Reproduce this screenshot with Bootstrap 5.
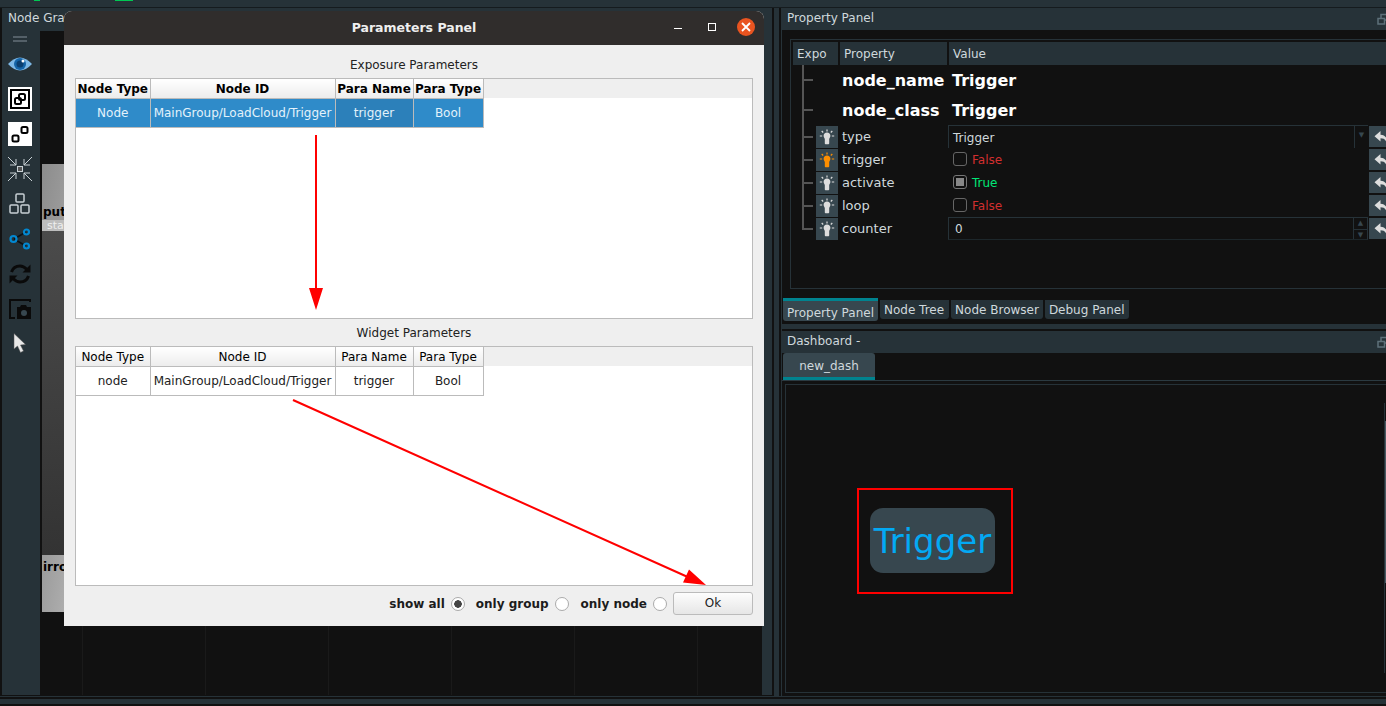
<!DOCTYPE html>
<html lang="en">
<head>
  <meta charset="UTF-8">
  <meta name="viewport" content="width=device-width, initial-scale=1.0">
  <title>Parameters Panel</title>
  <link rel="stylesheet" href="https://cdn.jsdelivr.net/npm/bootstrap@5.3.3/dist/css/bootstrap.min.css">
  <style>
    html, body { height: 100%; overflow: hidden; }
    body { background: #111; font: 12px/1.2 "DejaVu Sans", sans-serif; color: #cfd8dc; }
    .app-root { width: 1386px; height: 706px; position: relative; overflow: hidden; }

    .top-strip { height: 8px; border-bottom: 1px solid #151b1e;
      background: linear-gradient(#00c853, #00c853) 34px 0/6px 1px no-repeat,
                  linear-gradient(#00c853, #00c853) 115px 0/18px 1px no-repeat, #263238; }
    .bottom-strip { height: 10px; padding-top: 2px; border-top: 1px solid #263238; }
    .bottom-strip div { height: 5px; background: #263238; }
    .dock-row { height: 688px; }

    .left-dock { width: 770px; height: 687px; margin-left: 2px; background: #263238; flex: none; }
    .dock-splitter { width: 5px; height: 689px; margin: 0 2px; background: #263238; flex: none; }
    .dock-title { height: 22px; padding: 0 0 1px 5px; background: #263238; color: #cfd8dc; white-space: nowrap; overflow: hidden; }
    .left-dock .dock-title { padding-left: 6px; }
    .lock-icon { margin-left: auto; margin-right: -4px; margin-top: 1px; width: 13px; height: 12px; color: #5d7079; flex: none; }
    .tool-bar { width: 38px; padding: 1px 2px 0 0; background: #263238; }
    .grip { height: 10px; width: 14px; border-top: 2px solid #546068; margin-top: 5px; position: relative; }
    .grip::after { content: ""; position: absolute; left: 0; right: 0; top: 2px; height: 2px; background: #546068; }
    .tool-btn { height: 35px; width: 36px; }
    .graph-canvas { position: relative; height: 664px; margin-right: 10px; margin-top: 1px; overflow: hidden; background:
        linear-gradient(90deg, #1a1a1a 1px, transparent 1px) 42px 0/123px 100%, #111; }
    .node-piece { position: absolute; left: 2px; width: 60px; overflow: hidden; }
    .node-a { top: 133px; height: 67px; background: linear-gradient(100deg, #8c8c8c, #b0b0b0); color: #000; font-weight: 700; padding: 41px 0 0 1px; font-size: 12px; }
    .node-a-sub { position: absolute; left: 0; right: 0; top: 56px; height: 12px; background: #bdbdbd; color: #eee; font-weight: 400; font-size: 11px; padding-left: 5px; line-height: 11px; }
    .node-b { top: 200px; height: 324px; background: linear-gradient(#4b4b4b, #333); }
    .node-c { top: 524px; height: 57px; background: linear-gradient(100deg, #9a9a9a, #c4c4c4); color: #000; font-weight: 700; font-size: 12px; padding: 5px 0 0 1px; }

    .right-dock { width: 605px; border-left: 1px solid #263238; flex: none; }
    .prop-frame { height: 250px; margin: 9px 0 0 8px; border: 1px solid #263238; border-right: 0; padding: 2px 0 0 2px; }
    .prop-head { height: 23px; background: #263238; }
    .prop-head > div { line-height: 25px; padding-left: 4px; }
    .head-expo { width: 47px; border-right: 2px solid #111; }
    .head-prop { width: 109px; border-right: 2px solid #111; }
    .prop-row { position: relative; height: 23px; }
    .prop-row.tall { height: 30px; }
    .tree-gut { width: 23px; position: relative; flex: none; }
    .tree-gut::before { content: ""; position: absolute; left: 9px; top: 0; bottom: 0; width: 2px; background: #555; }
    .tree-gut::after { content: ""; position: absolute; left: 9px; width: 11px; top: 50%; height: 2px; margin-top: -1px; background: #555; }
    .prop-row.last .tree-gut::before { bottom: 50%; }
    .bulb-btn { width: 22px; height: 22px; background: #37474f; flex: none; color: #ddd; }
    .bulb-btn.on { color: #ff8f00; }
    .prop-label { width: 110px; padding-left: 4px; flex: none; font-size: 13px; }
    .prop-row.tall .bulb-gap { width: 22px; flex: none; }
    .prop-label.big-text, .big-text { font-size: 16px; font-weight: 700; color: #fff; white-space: nowrap; padding-top: 2px; }
    .big-value { padding-left: 4px; }
    .value-box { width: 420px; height: 23px; border: 1px solid #263238; border-bottom-color: #1d272b; padding-left: 4px; line-height: 24px; position: relative; flex: none; }
    .value-box.open-bottom { border-bottom: 0; border-right: 0; }
    .value-box.number-box { padding-left: 6px; line-height: 22px; }
    .value-plain { width: 420px; flex: none; padding-left: 5px; }
    .value-plain span { padding-top: 1px; }
    .spin-side { position: absolute; right: 0; top: 0; bottom: 0; width: 14px; border-left: 1px solid #263238; color: #37474f; font-size: 7px; text-align: center; line-height: 11px; }
    .spin-side div + div { border-top: 1px solid #263238; }
    .revert-btn { width: 17px; height: 21px; margin-left: 1px; background: #37474f; color: #ddd; flex: none; overflow: hidden; padding-left: 5px; }
    .revert-btn svg { flex: none; }
    .check-box.form-check-input { width: 14px; height: 14px; margin: 0 5px 0 0; background-color: transparent; border: 1px solid #666; border-radius: 3px; flex: none; }
    .check-box.form-check-input:checked { background-color: transparent; background-image: linear-gradient(#888, #888); background-size: 8px 8px; background-position: center; border-color: #777; }
    .txt-false { color: #d32f2f; }
    .txt-true { color: #00e676; }

    .tab-row { margin: 9px 0 3px 1px; height: 23px; align-items: flex-start; gap: 2px; }
    .dock-tab { color: #cfd8dc; background: #263238; height: 19px; margin-top: 2px; padding: 0 4px; line-height: 21px; border-radius: 0 0 3px 3px; white-space: nowrap; }
    .dock-tab.active-tab { height: 23px; margin-top: 0; border-top: 3px solid #00838f; background: #37474f; line-height: 24px; }
    .dock-tab.wide-tab { padding-right: 5px; }
    .dock-tab:hover { color: #cfd8dc; }
    .split-strip { height: 5px; background: #263238; margin-bottom: 2px; }
    .dash-tabs { height: 28px; border-bottom: 1px solid #2b3a41; padding-left: 1px; }
    .dash-tab { width: 92px; height: 27px; background: #37474f; border-bottom: 3px solid #00838f; border-radius: 3px 3px 0 0; text-align: center; line-height: 27px; color: #cfd8dc; }
    .dash-frame { position: relative; height: 309px; margin: 3px 0 0 3px; border: 1px solid #263238; border-right: 0; }
    .red-box { position: absolute; left: 71px; top: 103px; width: 156px; height: 106px; border: 2px solid #f00; }
    .trigger-btn { position: absolute; left: 84px; top: 123px; width: 125px; height: 65px; border-radius: 13px; background: #37474f; color: #03a9f4; font-size: 34px; line-height: 66px; text-align: center; white-space: nowrap; }
    .side-bar { position: absolute; right: 0; top: 18px; width: 2px; height: 270px; border-left: 1px solid #263238; }
    .side-bar::after { content: ""; position: absolute; left: 0; top: 18px; width: 2px; height: 162px; background: #4a5a62; }

    .param-dialog { position: absolute; left: 64px; top: 11px; width: 700px; height: 615px; background: #efefef; color: #222; border-radius: 8px 8px 0 0; overflow: hidden; }
    .dialog-head { height: 34px; background: #302d2c; color: #eee; font-weight: 700; font-size: 12.5px; position: relative; line-height: 34px; text-align: center; }
    .win-btn { position: absolute; }
    .win-min { left: 610px; top: 17px; width: 8px; height: 1px; background: #fff; }
    .win-max { left: 644px; top: 12px; width: 8px; height: 8px; border: 1px solid #fff; }
    .win-close { left: 673px; top: 7px; width: 18px; height: 18px; border-radius: 50%; background: #e95420; color: #fff; }
    .dialog-body { padding: 0 11px; }
    .grid-label { height: 33px; padding-top: 13px; text-align: center; font-size: 12px; line-height: 15px; }
    .grid-label.second { height: 27px; padding-top: 7px; }
    .grid-frame { height: 241px; border: 1px solid #bbb; background: linear-gradient(#efefef, #efefef) 0 0/100% 19px no-repeat, #fff; }
    .grid-frame.second { height: 240px; }
    .table.param-grid { width: 407px; table-layout: fixed; margin: 0; --bs-table-bg: transparent; border-color: #bbb; font-size: 12px; }
    .param-grid th, .param-grid td { padding: 0; text-align: center; vertical-align: middle; border-color: #bbb; white-space: nowrap; border-width: 0 1px 1px 0; }
    .param-grid th { height: 19px; padding-top: 1px; background: linear-gradient(#fff, #ececec); color: #000; font-weight: 400; }
    .param-grid.strong th { font-weight: 700; }
    .param-grid td { height: 29px; padding-top: 2px; color: #222; }
    .param-grid.selected td { background: #2f8bc9; color: #e3f2fb; }
    .param-grid.selected td.focus-cell { background: #2c80ba; }
    .w-type { width: 74px; } .w-id { width: 185px; } .w-name { width: 78px; } .w-ptype { width: 70px; }
    .dialog-foot { height: 35px; }
    .foot-opt { font-weight: 700; color: #1c1c1c; margin-right: 6px; padding-top: 1px; }
    .foot-radio.form-check-input { width: 14px; height: 14px; margin: 0 11px 0 0; border: 1px solid #aaa; background-color: #fff; flex: none; }
    .foot-radio.mid-radio.form-check-input { margin-right: 12px; }
    .foot-radio.last-radio.form-check-input { margin-right: 6px; }
    .foot-radio.form-check-input:checked { background-color: #fff; border-color: #aaa; background-image: radial-gradient(circle, #444 0 3.5px, transparent 4px); }
    .ok-btn.btn { width: 80px; height: 23px; padding: 0; font-size: 12px; line-height: 21px; color: #222; border: 1px solid #bbb; border-radius: 3px; background: linear-gradient(#fdfdfd, #e6e6e6); }
    .arrow-layer { position: absolute; left: 0; top: 0; pointer-events: none; }
  </style>
</head>
<body>
  <svg width="0" height="0" class="d-none">
    <symbol id="bulb" viewBox="0 0 16 16">
      <path fill="currentColor" d="M8 3.6c-2.1 0-3.4 1.500-3.400 3.200 0 1.400.9 2.200 1.200 3.100v4.300c0 .6.5 1 1 1h2.400c.5 0 1-.4 1-1V9.900c.3-.9 1.200-1.700 1.200-3.100 0-1.700-1.300-3.200-3.400-3.200z"/>
      <path stroke="currentColor" stroke-width="1.200" d="M8 .5v2M2.700 2l1.500 1.500M13.300 2l-1.500 1.500M.8 7h2.400M12.800 7h2.400"/>
    </symbol>
    <symbol id="reply" viewBox="0 0 14 14">
      <path fill="currentColor" d="M6.500 1 .5 6.200l6 5.300V8.300c3 0 5 1 6.300 4.700.8-4.700-1.500-8-6.300-8.300z"/>
    </symbol>
    <symbol id="lock" viewBox="0 0 13 12">
      <path fill="none" stroke="currentColor" stroke-width="1.500" d="M1 5.500h6.500v5.500H1zM4 5V1.500h8v5.500H8"/>
    </symbol>
  </svg>

  <div class="app-root">
    <div class="top-strip"></div>

    <div class="dock-row d-flex">
      <div class="left-dock">
        <div class="dock-title d-flex align-items-center">Node Graph</div>
        <div class="d-flex">
          <div class="tool-bar d-flex flex-column align-items-center">
            <div class="grip"></div>
            <div class="tool-btn d-flex align-items-center justify-content-center">
              <svg width="24" height="16" viewBox="0 0 24 16"><path fill="#7db8e6" d="M0 8Q12-5 24 8 12 21 0 8z"/><circle cx="12" cy="8" r="6" fill="#1565a8"/><circle cx="12" cy="8" r="3.500" fill="#0b3f70"/><circle cx="15" cy="5" r="1.500" fill="#fff"/></svg>
            </div>
            <div class="tool-btn d-flex align-items-center justify-content-center">
              <svg width="24" height="24" viewBox="0 0 24 24"><rect width="24" height="24" fill="#fff"/><rect x="3" y="3" width="18" height="18" fill="none" stroke="#000" stroke-width="2"/><rect x="7" y="11" width="6" height="6" rx="1.500" fill="none" stroke="#000" stroke-width="2"/><rect x="11" y="7" width="6" height="6" rx="1.500" fill="none" stroke="#000" stroke-width="2"/></svg>
            </div>
            <div class="tool-btn d-flex align-items-center justify-content-center">
              <svg width="24" height="24" viewBox="0 0 24 24"><rect width="24" height="24" fill="#fff"/><rect x="4.500" y="13.500" width="6" height="6" rx="1.500" fill="none" stroke="#000" stroke-width="2"/><rect x="13.500" y="5" width="6" height="6" rx="1.500" fill="none" stroke="#000" stroke-width="2"/></svg>
            </div>
            <div class="tool-btn d-flex align-items-center justify-content-center">
              <svg width="24" height="24" viewBox="0 0 24 24" fill="none" stroke="#c8d0d4"><rect x="9.500" y="9.500" width="5" height="5" fill="#555"/><path d="M0 0l8 8M24 0l-8 8M0 24l8-8M24 24l-8-8M8 2v6H2M16 2v6h6M8 22v-6H2M16 22v-6h6"/></svg>
            </div>
            <div class="tool-btn d-flex align-items-center justify-content-center">
              <svg width="22" height="22" viewBox="0 0 22 22" fill="none" stroke="#c8d0d4" stroke-width="1.500"><rect x="7" y="1" width="8" height="8" rx="1"/><rect x="1" y="12" width="8" height="8" rx="1"/><rect x="12" y="12" width="8" height="8" rx="1"/></svg>
            </div>
            <div class="tool-btn d-flex align-items-center justify-content-center">
              <svg width="22" height="22" viewBox="0 0 22 22" fill="none"><path stroke="#0c1113" stroke-width="1.500" d="M5 11l12-7M5 11l12 7"/><g stroke="#0288d1" stroke-width="2.200"><circle cx="4.500" cy="11" r="3"/><circle cx="17.500" cy="4" r="2.500"/><circle cx="17.500" cy="18" r="2.500"/></g></svg>
            </div>
            <div class="tool-btn d-flex align-items-center justify-content-center">
              <svg width="22" height="22" viewBox="0 0 22 22" fill="none" stroke="#0a0a0a" stroke-width="3"><path d="M2.500 9C4 4.500 7.500 3 11 3c3 0 5 1.500 7 3.500"/><path d="M19.500 13C18 17.500 14.500 19 11 19c-3 0-5-1.500-7-3.500"/><path fill="#0a0a0a" stroke="none" d="M21.500 1.500v8h-8zM.5 20.500v-8h8z"/></svg>
            </div>
            <div class="tool-btn d-flex align-items-center justify-content-center">
              <svg width="22" height="20" viewBox="0 0 22 20"><path fill="none" stroke="#0a0a0a" stroke-width="2" d="M21 3V1H1v18h5"/><path fill="#0a0a0a" d="M8 8h3l1-2h5l1 2h4v12H8z"/><circle cx="15" cy="14" r="3" fill="#37474f"/></svg>
            </div>
            <div class="tool-btn d-flex align-items-center justify-content-center">
              <svg width="14" height="21" viewBox="0 0 14 21"><path fill="#e8e8e8" stroke="#555" stroke-width=".5" d="M1 .5v15.500l3.500-3 3 6.500 3-1.500-3-6 5-.5z"/></svg>
            </div>
          </div>
          <div class="graph-canvas flex-grow-1">
            <div class="node-piece node-a">put<div class="node-a-sub">start</div></div>
            <div class="node-piece node-b"></div>
            <div class="node-piece node-c">irror</div>
          </div>
        </div>
      </div>
      <div class="dock-splitter"></div>

      <div class="right-dock">
        <div class="dock-title d-flex align-items-center">Property Panel<svg class="lock-icon"><use href="#lock"/></svg></div>
        <div class="prop-frame">
          <div class="prop-head d-flex">
            <div class="head-expo">Expo</div>
            <div class="head-prop">Property</div>
            <div>Value</div>
          </div>
          <div class="prop-row tall d-flex align-items-center">
            <div class="tree-gut align-self-stretch"></div><div class="bulb-gap"></div>
            <div class="prop-label big-text">node_name</div><div class="big-text big-value">Trigger</div>
          </div>
          <div class="prop-row tall d-flex align-items-center">
            <div class="tree-gut align-self-stretch"></div><div class="bulb-gap"></div>
            <div class="prop-label big-text">node_class</div><div class="big-text big-value">Trigger</div>
          </div>
          <div class="prop-row d-flex align-items-center">
            <div class="tree-gut align-self-stretch"></div>
            <div class="bulb-btn d-flex align-items-center justify-content-center"><svg width="16" height="16"><use href="#bulb"/></svg></div>
            <div class="prop-label">type</div>
            <div class="value-box open-bottom">Trigger<div class="spin-side"><div class="pt-1">&#9660;</div></div></div>
            <div class="revert-btn d-flex align-items-center"><svg width="14" height="14"><use href="#reply"/></svg></div>
          </div>
          <div class="prop-row d-flex align-items-center">
            <div class="tree-gut align-self-stretch"></div>
            <div class="bulb-btn on d-flex align-items-center justify-content-center"><svg width="16" height="16"><use href="#bulb"/></svg></div>
            <div class="prop-label">trigger</div>
            <div class="value-plain d-flex align-items-center"><input class="form-check-input check-box" type="checkbox"><span class="txt-false">False</span></div>
            <div class="revert-btn d-flex align-items-center"><svg width="14" height="14"><use href="#reply"/></svg></div>
          </div>
          <div class="prop-row d-flex align-items-center">
            <div class="tree-gut align-self-stretch"></div>
            <div class="bulb-btn d-flex align-items-center justify-content-center"><svg width="16" height="16"><use href="#bulb"/></svg></div>
            <div class="prop-label">activate</div>
            <div class="value-plain d-flex align-items-center"><input class="form-check-input check-box" type="checkbox" checked><span class="txt-true">True</span></div>
            <div class="revert-btn d-flex align-items-center"><svg width="14" height="14"><use href="#reply"/></svg></div>
          </div>
          <div class="prop-row d-flex align-items-center">
            <div class="tree-gut align-self-stretch"></div>
            <div class="bulb-btn d-flex align-items-center justify-content-center"><svg width="16" height="16"><use href="#bulb"/></svg></div>
            <div class="prop-label">loop</div>
            <div class="value-plain d-flex align-items-center"><input class="form-check-input check-box" type="checkbox"><span class="txt-false">False</span></div>
            <div class="revert-btn d-flex align-items-center"><svg width="14" height="14"><use href="#reply"/></svg></div>
          </div>
          <div class="prop-row last d-flex align-items-center">
            <div class="tree-gut align-self-stretch"></div>
            <div class="bulb-btn d-flex align-items-center justify-content-center"><svg width="16" height="16"><use href="#bulb"/></svg></div>
            <div class="prop-label">counter</div>
            <div class="value-box number-box">0<div class="spin-side"><div>&#9650;</div><div>&#9660;</div></div></div>
            <div class="revert-btn d-flex align-items-center"><svg width="14" height="14"><use href="#reply"/></svg></div>
          </div>
        </div>

        <ul class="nav tab-row">
          <li><a class="dock-tab active-tab d-block text-decoration-none" href="#">Property Panel</a></li>
          <li><a class="dock-tab wide-tab d-block text-decoration-none" href="#">Node Tree</a></li>
          <li><a class="dock-tab d-block text-decoration-none" href="#">Node Browser</a></li>
          <li><a class="dock-tab d-block text-decoration-none" href="#">Debug Panel</a></li>
        </ul>
        <div class="split-strip"></div>
        <div class="dock-title d-flex align-items-center">Dashboard -<svg class="lock-icon"><use href="#lock"/></svg></div>
        <div class="dash-tabs"><div class="dash-tab">new_dash</div></div>
        <div class="dash-frame">
          <div class="red-box"></div>
          <div class="trigger-btn">Trigger</div>
          <div class="side-bar"></div>
        </div>
      </div>
    </div>

    <div class="bottom-strip"><div></div></div>

    <div class="param-dialog">
      <div class="dialog-head">
        Parameters Panel
        <span class="win-btn win-min"></span>
        <span class="win-btn win-max"></span>
        <span class="win-btn win-close d-flex align-items-center justify-content-center">
          <svg width="10" height="10" viewBox="0 0 10 10"><path stroke="#fff" stroke-width="1.800" d="M1 1l8 8M9 1l-8 8"/></svg>
        </span>
      </div>
      <div class="dialog-body">
        <div class="grid-label">Exposure Parameters</div>
        <div class="grid-frame">
          <table class="table param-grid strong selected">
            <colgroup><col class="w-type"><col class="w-id"><col class="w-name"><col class="w-ptype"></colgroup>
            <thead><tr><th>Node Type</th><th>Node ID</th><th>Para Name</th><th>Para Type</th></tr></thead>
            <tbody><tr><td>Node</td><td>MainGroup/LoadCloud/Trigger</td><td class="focus-cell">trigger</td><td>Bool</td></tr></tbody>
          </table>
        </div>
        <div class="grid-label second">Widget Parameters</div>
        <div class="grid-frame second">
          <table class="table param-grid">
            <colgroup><col class="w-type"><col class="w-id"><col class="w-name"><col class="w-ptype"></colgroup>
            <thead><tr><th>Node Type</th><th>Node ID</th><th>Para Name</th><th>Para Type</th></tr></thead>
            <tbody><tr><td>node</td><td>MainGroup/LoadCloud/Trigger</td><td>trigger</td><td>Bool</td></tr></tbody>
          </table>
        </div>
        <div class="dialog-foot d-flex align-items-center justify-content-end">
          <span class="foot-opt">show all</span><input class="form-check-input foot-radio" type="radio" name="scope" checked>
          <span class="foot-opt">only group</span><input class="form-check-input foot-radio mid-radio" type="radio" name="scope">
          <span class="foot-opt">only node</span><input class="form-check-input foot-radio last-radio" type="radio" name="scope">
          <button class="btn ok-btn" type="button">Ok</button>
        </div>
      </div>
      <svg class="arrow-layer" width="700" height="615" viewBox="64 11 700 615">
        <path stroke="#f00" stroke-width="2" d="M316 135V292M293 400 690 578"/>
        <path fill="#f00" d="M309 288h14l-7 22zM706 585 683 582.500 689 569.500z"/>
      </svg>
    </div>
  </div>
</body>
</html>
